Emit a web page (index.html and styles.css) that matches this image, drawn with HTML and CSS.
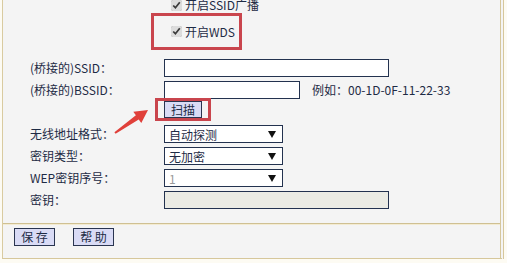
FILE: index.html
```html
<!DOCTYPE html>
<html lang="zh-CN">
<head>
  <meta charset="UTF-8">
  <title>无线网络基本设置</title>
  <link rel="stylesheet" href="styles.css">
</head>
<body>
  <div class="panel">
    <!-- 表单区域 -->
    <form class="form">
      <div class="row check-row">
        <span class="label"></span>
        <label class="check"><input type="checkbox" checked>开启SSID广播</label>
      </div>
      <div class="row check-row">
        <span class="label"></span>
        <label class="check"><input type="checkbox" checked>开启WDS</label>
      </div>
      <div class="row ssid-row">
        <span class="label">(桥接的)SSID：</span>
        <input type="text" class="field wide">
      </div>
      <div class="row">
        <span class="label">(桥接的)BSSID：</span>
        <input type="text" class="field short">
        <span class="hint">例如：00-1D-0F-11-22-33</span>
      </div>
      <div class="row scan-row">
        <span class="label"></span>
        <button type="button" class="btn scan">扫描</button>
      </div>
      <div class="row">
        <span class="label">无线地址格式：</span>
        <div class="select"><select><option>自动探测</option></select></div>
      </div>
      <div class="row">
        <span class="label">密钥类型：</span>
        <div class="select"><select><option>无加密</option></select></div>
      </div>
      <div class="row">
        <span class="label">WEP密钥序号：</span>
        <div class="select"><select class="dim"><option>1</option></select></div>
      </div>
      <div class="row">
        <span class="label">密钥：</span>
        <input type="text" class="field wide" disabled>
      </div>
    </form>

    <!-- 底部按钮 -->
    <div class="bar">
      <button type="button" class="btn">保 存</button>
      <button type="button" class="btn">帮 助</button>
    </div>

    <!-- 标注 -->
    <div class="mark mark-wds"></div>
    <div class="mark mark-scan"></div>
    <svg class="arrow" width="42" height="32" viewBox="0 0 42 32">
      <polygon points="1.4,26.2 22.9,9.3 20.3,5.7 35,4 28.3,17.1 25.7,13.5 2.6,27.8" fill="#e0403a"/>
    </svg>
  </div>
</body>
</html>
```

FILE: styles.css
```css
body {
  margin: 0;
  background: #fdfbf3;
  font-family: "Noto Sans CJK SC", sans-serif;
  font-size: 12px;
  color: #1e2b45;
}
.panel {
  position: relative;
  margin-left: 2px;
  width: 497px;
  height: 258px;
  border-left: 1px solid #d9cba0;
  border-right: 4px double #d6c79b;
  border-bottom: 1px solid #d6c79b;
  background: #f4f4f4;
  overflow: hidden;
}
.form {
  margin: -8px 0 0;
  padding: 0 0 22px 27px;
  height: 232px;
  box-sizing: border-box;
  border-bottom: 1px solid #cfc092;
}
.row {
  display: flex;
  align-items: center;
  height: 22px;
}
.label {
  width: 134px;
  flex: none;
  line-height: 1;
}
.check-row {
  height: 27px;
}
.check-row:first-child {
  height: 26px;
}
.check {
  display: flex;
  align-items: center;
  margin-left: 7px;
  line-height: 1;
}
.check input {
  margin: 0 3px 0 0;
  width: 11px;
  height: 11px;
  accent-color: #dcdcdc;
}
.ssid-row {
  margin-top: 12px;
}
.field {
  height: 18px;
  box-sizing: border-box;
  border: 1px solid #23324f;
  background: #fff;
  padding: 0 3px;
  font: inherit;
}
.field.wide {
  width: 225px;
}
.field.short {
  width: 136px;
}
.field:disabled {
  background: #ebebe4;
}
.hint {
  margin-left: 12px;
  line-height: 1;
}
.scan-row {
  align-items: flex-start;
}
.btn {
  height: 18px;
  padding: 0;
  border: 1px solid #2a3550;
  background: #d9dbf5;
  font: inherit;
  color: #1e2b45;
  line-height: 1;
  cursor: pointer;
}
.scan {
  width: 38px;
  height: 17px;
}
.select {
  position: relative;
  width: 119px;
  height: 18px;
}
.select select {
  appearance: none;
  width: 100%;
  height: 100%;
  margin: 0;
  border: 1px solid #23324f;
  border-radius: 0;
  background: #fff;
  padding: 0 4px;
  font: inherit;
  color: #1e2b45;
}
.select select.dim {
  color: #9a9a9a;
}
.select::after {
  content: "";
  position: absolute;
  right: 7px;
  top: 6px;
  border-left: 4px solid transparent;
  border-right: 4px solid transparent;
  border-top: 7px solid #111;
  pointer-events: none;
}
.bar {
  display: flex;
  gap: 18px;
  padding: 3px 0 0 11px;
  border-top: 1px solid #f3ebd2;
}
.bar .btn {
  width: 41px;
}
.mark {
  position: absolute;
  box-sizing: border-box;
  border: 3px solid #c9454d;
}
.mark-wds {
  left: 148px;
  top: 13px;
  width: 91px;
  height: 37px;
}
.mark-scan {
  left: 152px;
  top: 98px;
  width: 56px;
  height: 23px;
}
.arrow {
  position: absolute;
  left: 110px;
  top: 106px;
}
```
